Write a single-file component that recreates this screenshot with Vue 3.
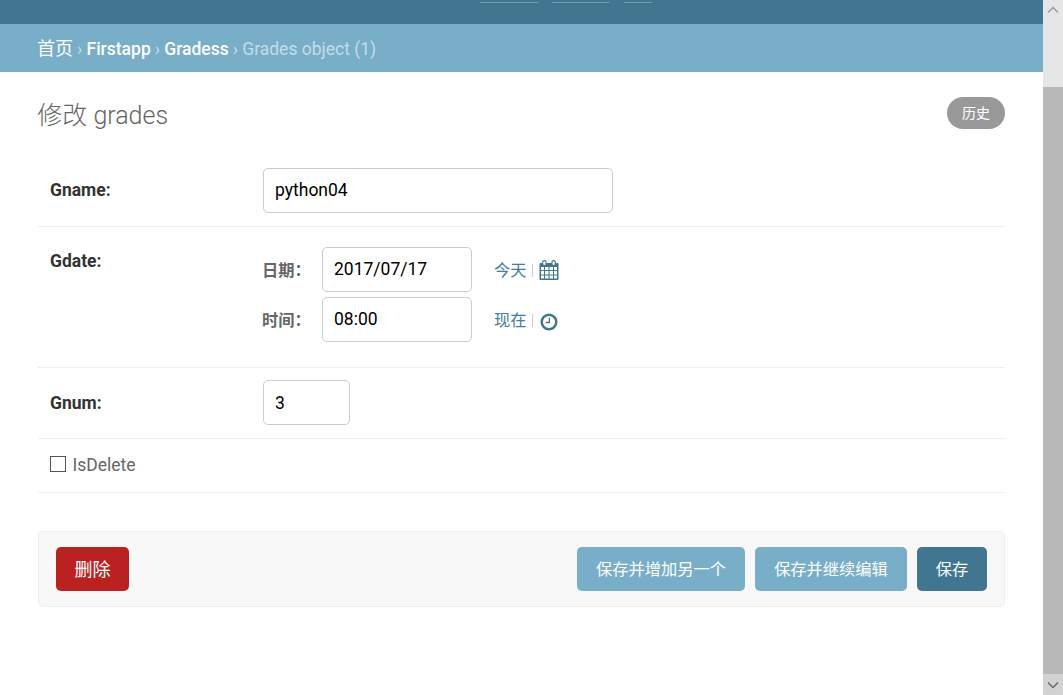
<script setup>
import { ref } from 'vue'

const name = ref('python04')
const date = ref('2017/07/17')
const time = ref('08:00')
const num = ref('3')
const deleted = ref(false)
</script>

<template>
  <div class="window">
    <div class="page">
      <header class="header"><i class="u1"></i><i class="u2"></i><i class="u3"></i></header>
      <nav class="crumbs">
        <a class="cjk">首页</a><span class="sep">›</span><a>Firstapp</a><span class="sep">›</span><a class="model">Gradess</a><span class="sep">›</span><span class="here">Grades object (1)</span>
      </nav>
      <main class="content">
        <div class="title-row">
          <h1>修改 <span>grades</span></h1>
          <a class="history">历史</a>
        </div>
        <form @submit.prevent>
          <div class="row name-row">
            <label class="label">Gname:</label>
            <input v-model="name" class="input wide" type="text">
          </div>
          <div class="row date-row">
            <label class="label">Gdate:</label>
            <div class="datetime">
              <div class="line">
                <span class="sub">日期：</span>
                <input v-model="date" class="input" type="text">
                <a class="shortcut">今天</a><span class="bar"></span>
                <svg class="cal" width="20" height="21" viewBox="0 0 20 21">
                  <path fill="#417690" d="M1.5 3H18.5Q19.5 3 19.5 4V19Q19.5 20 18.5 20H1.5Q.5 20 .5 19V4Q.5 3 1.5 3Z" />
                  <path fill="#fff" d="M2 7h3v3H2zm4 0h3.5v3H6zm4.5 0H14v3h-3.5zM15 7h3v3h-3zM2 11h3v3.5H2zm4 0h3.5v3.5H6zm4.5 0H14v3.5h-3.5zM15 11h3v3.5h-3zM2 15.5h3v3H2zm4 0h3.5v3H6zm4.5 0H14v3h-3.5zM15 15.5h3v3h-3z" />
                  <rect x="3.7" y=".6" width="3.4" height="5" rx="1.7" fill="#fff" stroke="#417690" stroke-width="1.1" />
                  <rect x="12.9" y=".6" width="3.4" height="5" rx="1.7" fill="#fff" stroke="#417690" stroke-width="1.1" />
                </svg>
              </div>
              <div class="line">
                <span class="sub">时间：</span>
                <input v-model="time" class="input" type="text">
                <a class="shortcut">现在</a><span class="bar"></span>
                <svg class="clock" width="18" height="18" viewBox="0 0 18 18" fill="none" stroke="#417690">
                  <circle cx="9" cy="9" r="7.3" stroke-width="2.5" />
                  <path d="M9.4 4.5V9.5H5.7" stroke-width="1.3" />
                </svg>
              </div>
            </div>
          </div>
          <div class="row num-row">
            <label class="label">Gnum:</label>
            <input v-model="num" class="input small" type="text">
          </div>
          <div class="row check-row">
            <input id="del" v-model="deleted" class="check" type="checkbox">
            <label for="del">IsDelete</label>
          </div>
          <div class="submit-row">
            <button class="btn delete">删除</button>
            <button class="btn another">保存并增加另一个</button>
            <button class="btn more">保存并继续编辑</button>
            <button class="btn save">保存</button>
          </div>
        </form>
      </main>
    </div>
    <aside class="scrollbar">
      <svg width="20" height="20" viewBox="0 0 20 20"><path d="M5 12.5 10 7.5 15 12.5" fill="none" stroke="#999" stroke-width="1.4" /></svg>
      <div class="thumb"></div>
      <svg class="down" width="20" height="21" viewBox="0 0 20 21"><path d="M5 8.5 10 13.5 15 8.5" fill="none" stroke="#666" stroke-width="1.4" /></svg>
    </aside>
  </div>
</template>

<style>
html, body { margin: 0; background: #fff; overflow: hidden; }
</style>

<style scoped>
* { box-sizing: border-box; }
.window { display: flex; height: 695px; font-family: Roboto, "Noto Sans CJK SC", sans-serif; font-size: 17.5px; color: #666; }
.page { flex: 1; }
.header { display: flex; height: 24px; padding: 2px 0 0 480px; background: #417690; }
.header i { height: 1px; background: #7a9fb1; }
.u1 { width: 58px; }
.u2 { width: 57px; margin-left: 14px; }
.u3 { width: 28px; margin-left: 15px; }
.crumbs { display: flex; align-items: center; height: 48px; padding: 2px 38px 0 37px; background: #79aec8; color: #c4dce8; line-height: 20px; white-space: nowrap; }
.crumbs a { color: #fff; font-weight: 500; }
.crumbs .cjk { font-weight: 400; font-size: 18px; width: 36px; }
.sep { width: 13.5px; text-align: center; }
.content { padding: 25px 38px 0; }
.title-row { display: flex; justify-content: space-between; align-items: flex-start; height: 71px; }
h1 { margin: 3px 0 0 -.7px; font-size: 25px; line-height: 31px; font-weight: 300; white-space: nowrap; }
.history { width: 58px; height: 32px; border-radius: 16px; background: #999; color: #fff; font-size: 14px; line-height: 32px; text-align: center; }
.row { display: flex; padding-left: 12px; border-bottom: 1px solid #eee; }
.label { width: 213px; font-weight: 700; color: #333; line-height: 20px; }
.name-row { height: 59px; }
.name-row .label { margin-top: 12px; }
.input { width: 150px; height: 45px; padding: 0 11px 2px; border: 1px solid #ccc; border-radius: 5px; background: #fff; color: #000; font: 17.5px Roboto, sans-serif; outline: none; }
.wide { width: 350px; }
.small { width: 87px; padding-bottom: 0; }
.date-row { height: 141px; padding-top: 20px; }
.date-row .label { margin-top: 4px; }
.datetime { display: flex; flex-direction: column; gap: 5px; }
.line { display: flex; align-items: center; height: 45px; }
.sub { width: 60px; margin-left: -1px; padding-top: 2px; font-size: 16.25px; font-weight: 700; line-height: 20px; white-space: nowrap; }
.shortcut { width: 34px; margin-left: 22px; padding-top: 2px; color: #447e9b; font-size: 16.25px; line-height: 20px; font-weight: 400; }
.bar { width: 1px; height: 13px; margin-left: 4px; margin-top: 2px; background: #ccc; }
.cal { margin-left: 6px; margin-top: 1px; }
.clock { margin-left: 7px; margin-top: 5px; }
.num-row { height: 71px; padding-top: 12px; }
.num-row .label { margin-top: 13px; }
.check-row { align-items: center; height: 54px; padding-bottom: 2px; }
.check-row label { margin-left: 6.5px; line-height: 20px; }
.check { appearance: none; width: 16px; height: 16px; margin: 0 0 2px; border: 1px solid #555; background: #fff; }
.submit-row { display: flex; align-items: center; height: 76px; margin-top: 38px; padding: 0 17px; border: 1px solid #eee; border-radius: 5px; background: #f8f8f8; }
.btn { height: 44px; margin: 0 0 0 10px; padding: 0 0 2px; border: 0; border-radius: 5px; background: #79aec8; color: #fff; font-family: inherit; font-size: 16.25px; white-space: nowrap; }
.btn.delete { width: 73px; margin: 0 auto 0 0; background: #ba2121; font-size: 18px; }
.another { width: 168px; }
.more { width: 152px; }
.btn.save { width: 70px; background: #417690; }
.scrollbar { display: flex; flex-direction: column; width: 20px; background: #e6e6e6; }
.thumb { flex: 1; margin-top: 67px; background: #b8b8b8; }
.down { background: #d2d2d2; }
</style>
